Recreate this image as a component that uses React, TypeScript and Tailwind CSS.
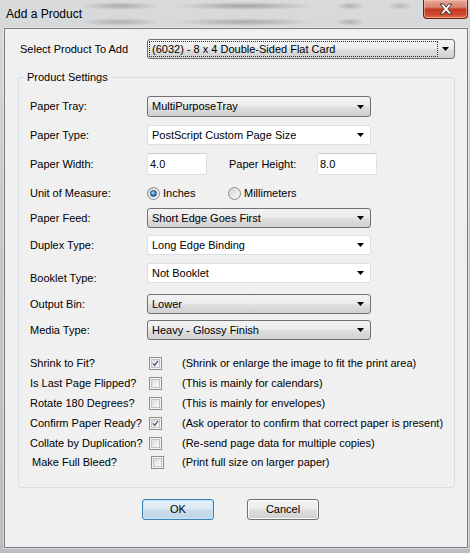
import clsx from "clsx";

const ui = "font-['Liberation_Sans',Arial,sans-serif] text-[11px] leading-[13px] text-black";

function Arrow() {
  return (
    <svg width="7" height="4" viewBox="0 0 7 4" className="shrink-0">
      <path d="M0 0h7L3.5 4z" fill="#000" />
    </svg>
  );
}

function Combo({
  value,
  tone,
  className,
}: {
  value: string;
  tone: "gray" | "white";
  className?: string;
}) {
  return (
    <div
      className={clsx(
        "flex h-[20px] w-[224px] items-center justify-between pl-[4px] pr-[6px]",
        tone === "gray"
          ? "rounded-[3px] border border-[#707070] bg-[linear-gradient(#f3f3f3,#ececec_45%,#dedede_55%,#d0d0d0)]"
          : "rounded-[2px] border border-[#dcdfe4] bg-white",
        className
      )}
    >
      <span className="truncate">{value}</span>
      <Arrow />
    </div>
  );
}

function TextBox({ value }: { value: string }) {
  return (
    <div className="flex h-[22px] w-[60px] items-center rounded-[2px] border border-[#dcdfe4] border-t-[#c9ccd2] bg-white pl-[2px]">
      {value}
    </div>
  );
}

function Radio({ on, label }: { on?: boolean; label: string }) {
  return (
    <div className="flex items-center gap-[3px]">
      <span className="flex h-[13px] w-[13px] items-center justify-center rounded-full border border-[#8a8a8a] bg-[linear-gradient(135deg,#d4d4d4,#fafafa)]">
        {on && (
          <span className="h-[7px] w-[7px] rounded-full border border-[#1c4d7c] bg-[radial-gradient(circle_at_40%_35%,#a6dcfa,#2f7fc3_55%,#123f6e)]" />
        )}
      </span>
      <span>{label}</span>
    </div>
  );
}

function Check({ on }: { on?: boolean }) {
  return (
    <span className="flex h-[13px] w-[13px] items-center justify-center border border-[#8e8f8f] bg-[#f4f4f4]">
      <span className="flex h-[9px] w-[9px] items-center justify-center border border-[#c2c2c2] bg-[linear-gradient(135deg,#dadada,#fcfcfc)]">
        {on && (
          <svg width="9" height="9" viewBox="0 0 9 9">
            <path d="M1.2 4.4 3.4 7 7.8 1" fill="none" stroke="#4d6090" strokeWidth="1.7" />
          </svg>
        )}
      </span>
    </span>
  );
}

function Row({ label, children, className }: { label: string; children: React.ReactNode; className?: string }) {
  return (
    <div className={clsx("flex items-center", className)}>
      <span className="w-[117px] shrink-0">{label}</span>
      {children}
    </div>
  );
}

const flags = [
  { label: "Shrink to Fit?", on: true, note: "(Shrink or enlarge the image to fit the print area)" },
  { label: "Is Last Page Flipped?", note: "(This is mainly for calendars)" },
  { label: "Rotate 180 Degrees?", note: "(This is mainly for envelopes)" },
  { label: "Confirm Paper Ready?", on: true, note: "(Ask operator to confirm that correct paper is present)" },
  { label: "Collate by Duplication?", note: "(Re-send page data for multiple copies)" },
  { label: "Make Full Bleed?", note: "(Print full size on larger paper)", indent: true },
];

function Button({ label, primary }: { label: string; primary?: boolean }) {
  return (
    <div
      className={clsx(
        "flex h-[21px] w-[72px] items-center justify-center rounded-[3px] border",
        primary
          ? "border-[#3c7fb1] bg-[linear-gradient(#e6f0f8,#dbe8f2_48%,#c9dcea_52%,#c0d6e7)] shadow-[inset_0_0_0_1px_#c4e6fa]"
          : "border-[#707070] bg-[linear-gradient(#f3f3f3,#ececec_48%,#dedede_52%,#d0d0d0)] shadow-[inset_0_0_0_1px_#fbfbfb]"
      )}
    >
      {label}
    </div>
  );
}

function CloseButton() {
  return (
    <div className="mr-[2px] flex h-[19px] w-[45px] items-center justify-center rounded-b-[4px] border border-t-0 border-[#6b2318] bg-[linear-gradient(#e9a898,#d9826c_40%,#c2391f_52%,#cf4a2c_80%,#e07052)] shadow-[inset_0_0_0_1px_rgba(255,210,200,0.45)]">
      <svg width="14" height="12" viewBox="0 0 14 12">
        <path
          d="M1 1h3.4L7 4.2 9.6 1H13L8.8 6 13 11H9.6L7 7.8 4.4 11H1l4.2-5z"
          fill="#fff"
          stroke="#3b3b3b"
          strokeWidth="1"
          strokeLinejoin="round"
        />
      </svg>
    </div>
  );
}

export default function App() {
  return (
    <div
      className={clsx(
        ui,
        "flex h-[553px] w-[470px] flex-col overflow-hidden bg-[linear-gradient(180deg,#d8dadc,#c6c9cc_40%,#babdc1)] pb-[5px] pl-[4px] pr-[2px]"
      )}
    >
      {/* title bar over blurred glass */}
      <div className="-ml-[4px] -mr-[2px] flex h-[28px] shrink-0 items-start justify-between bg-[radial-gradient(ellipse_40px_4px_at_120px_6px,rgba(80,80,80,0.35),transparent),radial-gradient(ellipse_70px_4px_at_245px_6px,rgba(80,80,80,0.4),transparent),radial-gradient(ellipse_40px_4px_at_120px_22px,rgba(80,80,80,0.3),transparent),radial-gradient(ellipse_70px_4px_at_245px_22px,rgba(80,80,80,0.35),transparent),radial-gradient(ellipse_14px_4px_at_350px_6px,rgba(80,80,80,0.3),transparent),radial-gradient(ellipse_14px_4px_at_350px_22px,rgba(80,80,80,0.3),transparent),radial-gradient(ellipse_12px_4px_at_400px_6px,rgba(80,80,80,0.25),transparent)]">
        <span className="pl-[6px] pt-[7px] text-[12px] leading-[14px]">Add a Product</span>
        <CloseButton />
      </div>

      {/* client area */}
      <div className="flex flex-1 flex-col border border-[#7b7b7b] bg-[#f0f0f0] shadow-[0_0_0_1px_rgba(255,255,255,0.35)]">
        <div className="mt-[10px] flex items-center">
          <span className="w-[142px] shrink-0 pl-[15px]">Select Product To Add</span>
          <div className="flex h-[20px] w-[308px] items-center rounded-[3px] border border-[#707070] bg-[linear-gradient(#f3f3f3,#ececec_45%,#dedede_55%,#d0d0d0)] px-[1px]">
            <span className="flex h-[16px] w-[289px] items-center border border-dotted border-[#333] pl-[2px]">
              (6032) - 8 x 4 Double-Sided Flat Card
            </span>
            <span className="flex flex-1 justify-center">
              <Arrow />
            </span>
          </div>
        </div>

        <fieldset className="ml-[13px] mt-[12px] w-[437px] rounded-[3px] border border-[#d5dfe5] pb-[15px] pl-[11px]">
          <legend className="-ml-[6px] px-[3px] leading-[13px]">Product Settings</legend>

          <Row label="Paper Tray:" className="mt-[12px]">
            <Combo tone="gray" value="MultiPurposeTray" className="h-[21px]" />
          </Row>
          <Row label="Paper Type:" className="mt-[8px]">
            <Combo tone="white" value="PostScript Custom Page Size" />
          </Row>
          <Row label="Paper Width:" className="mt-[8px]">
            <TextBox value="4.0" />
            <span className="ml-[22px] w-[88px]">Paper Height:</span>
            <TextBox value="8.0" />
          </Row>
          <Row label="Unit of Measure:" className="mt-[10px] h-[16px]">
            <div className="w-[81px]">
              <Radio on label="Inches" />
            </div>
            <Radio label="Millimeters" />
          </Row>
          <Row label="Paper Feed:" className="mt-[7px]">
            <Combo tone="gray" value="Short Edge Goes First" />
          </Row>
          <Row label="Duplex Type:" className="mt-[7px]">
            <Combo tone="white" value="Long Edge Binding" />
          </Row>
          <div className="mt-[8px] flex items-start">
            <span className="w-[117px] shrink-0 pt-[9px]">Booklet Type:</span>
            <Combo tone="white" value="Not Booklet" />
          </div>
          <Row label="Output Bin:" className="mt-[9px]">
            <Combo tone="gray" value="Lower" />
          </Row>
          <Row label="Media Type:" className="mt-[6px]">
            <Combo tone="gray" value="Heavy - Glossy Finish" />
          </Row>

          <div className="mt-[13px] flex flex-col">
            {flags.map((f) => (
              <div key={f.label} className={clsx("flex h-[20px] items-center", f.indent && "-mt-[1px]")}>
                <span className={clsx("w-[119px] shrink-0", f.indent && "pl-[2px]")}>{f.label}</span>
                <span className={clsx("w-[33px] shrink-0", f.indent && "pl-[2px]")}>
                  <Check on={f.on} />
                </span>
                <span>{f.note}</span>
              </div>
            ))}
          </div>
        </fieldset>

        <div className="mt-[11px] flex gap-[33px] pl-[137px]">
          <Button label="OK" primary />
          <Button label="Cancel" />
        </div>
      </div>
    </div>
  );
}
